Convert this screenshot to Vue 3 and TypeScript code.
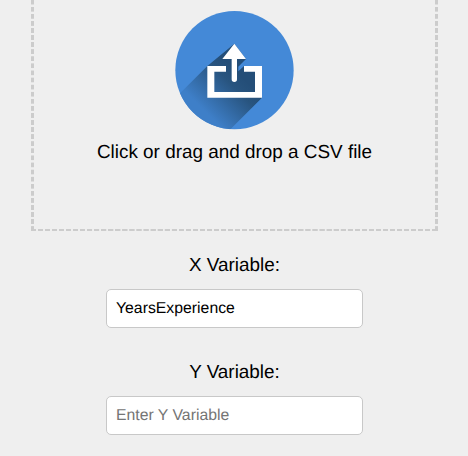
<script setup lang="ts">
import { ref } from 'vue'

const xVariable = ref<string>('YearsExperience')
const yVariable = ref<string>('')
</script>

<template>
  <main class="page">
    <section class="dropzone">
      <svg class="upload" viewBox="0 0 420 420" aria-hidden="true">
        <defs>
          <linearGradient id="shade" gradientUnits="userSpaceOnUse" x1="225" y1="225" x2="118" y2="332">
            <stop offset="0" stop-color="#244e78" />
            <stop offset="0.25" stop-color="#28547f" />
            <stop offset="1" stop-color="#3e7fc8" />
          </linearGradient>
          <clipPath id="disc"><circle cx="208.5" cy="210.5" r="177.5" /></clipPath>
        </defs>
        <circle cx="208.5" cy="210.5" r="177.5" fill="#4489d7" />
        <path clip-path="url(#disc)" fill="url(#shade)" d="M208 131L243 177L220 200V214L237 198H291V293L171 413L0 325L127 198Z" />
        <path fill="#fff" d="M127 198H183V215H148V276H270V215H237V198H291V293H127Z" />
        <path fill="#fff" d="M208 131L243 177H216V238A8 8 0 0 1 200 238V177H172Z" />
      </svg>
      <p class="hint">Click or drag and drop a CSV file</p>
    </section>
    <div class="field">
      <label for="x-variable">X Variable:</label>
      <input id="x-variable" v-model="xVariable" type="text" placeholder="Enter X Variable" />
    </div>
    <div class="field">
      <label for="y-variable">Y Variable:</label>
      <input id="y-variable" v-model="yVariable" type="text" placeholder="Enter Y Variable" />
    </div>
  </main>
</template>

<style>
body {
  background: #efefef;
  overflow: hidden;
}
</style>

<style scoped>
.page {
  display: flex;
  flex-direction: column;
  align-items: center;
  width: 469px;
  height: 456px;
  overflow: hidden;
  background: #efefef;
  font-family: "Liberation Sans", Arial, sans-serif;
  color: #000;
  text-rendering: geometricPrecision;
}
.dropzone {
  box-sizing: border-box;
  display: flex;
  flex: none;
  flex-direction: column;
  align-items: center;
  width: 407px;
  height: 231px;
  margin-bottom: 24px;
  background:
    repeating-linear-gradient(to bottom, #ccc 0 4.2px, #efefef 4.8px 6.5px, #ccc 7.08px) left top / 3px 100% no-repeat,
    repeating-linear-gradient(to bottom, #ccc 0 4.2px, #efefef 4.8px 6.5px, #ccc 7.08px) right top / 3px 100% no-repeat,
    repeating-linear-gradient(to right, #ccc 0 4.8px, #efefef 5.2px 6.7px, #ccc 7.04px) left bottom / 100% 2px no-repeat;
}
.upload {
  display: block;
  flex: none;
  width: 140px;
  height: 140px;
}
.hint {
  margin: 1px 0 0;
  font-size: 18.9px;
  line-height: 23px;
  white-space: nowrap;
}
.field {
  display: flex;
  flex-direction: column;
  align-items: center;
  height: 107px;
  flex: none;
}
label {
  font-size: 18.9px;
  line-height: 22px;
  margin-bottom: 12px;
}
input {
  box-sizing: border-box;
  width: 257px;
  height: 39px;
  padding: 0 9px;
  border: 1px solid #c8c8c8;
  border-radius: 5px;
  background: #fff;
  color: #000;
  font-family: inherit;
  font-size: 15.8px;
  text-rendering: inherit;
  outline: none;
}
input::placeholder {
  color: #757575;
  opacity: 1;
}
</style>
